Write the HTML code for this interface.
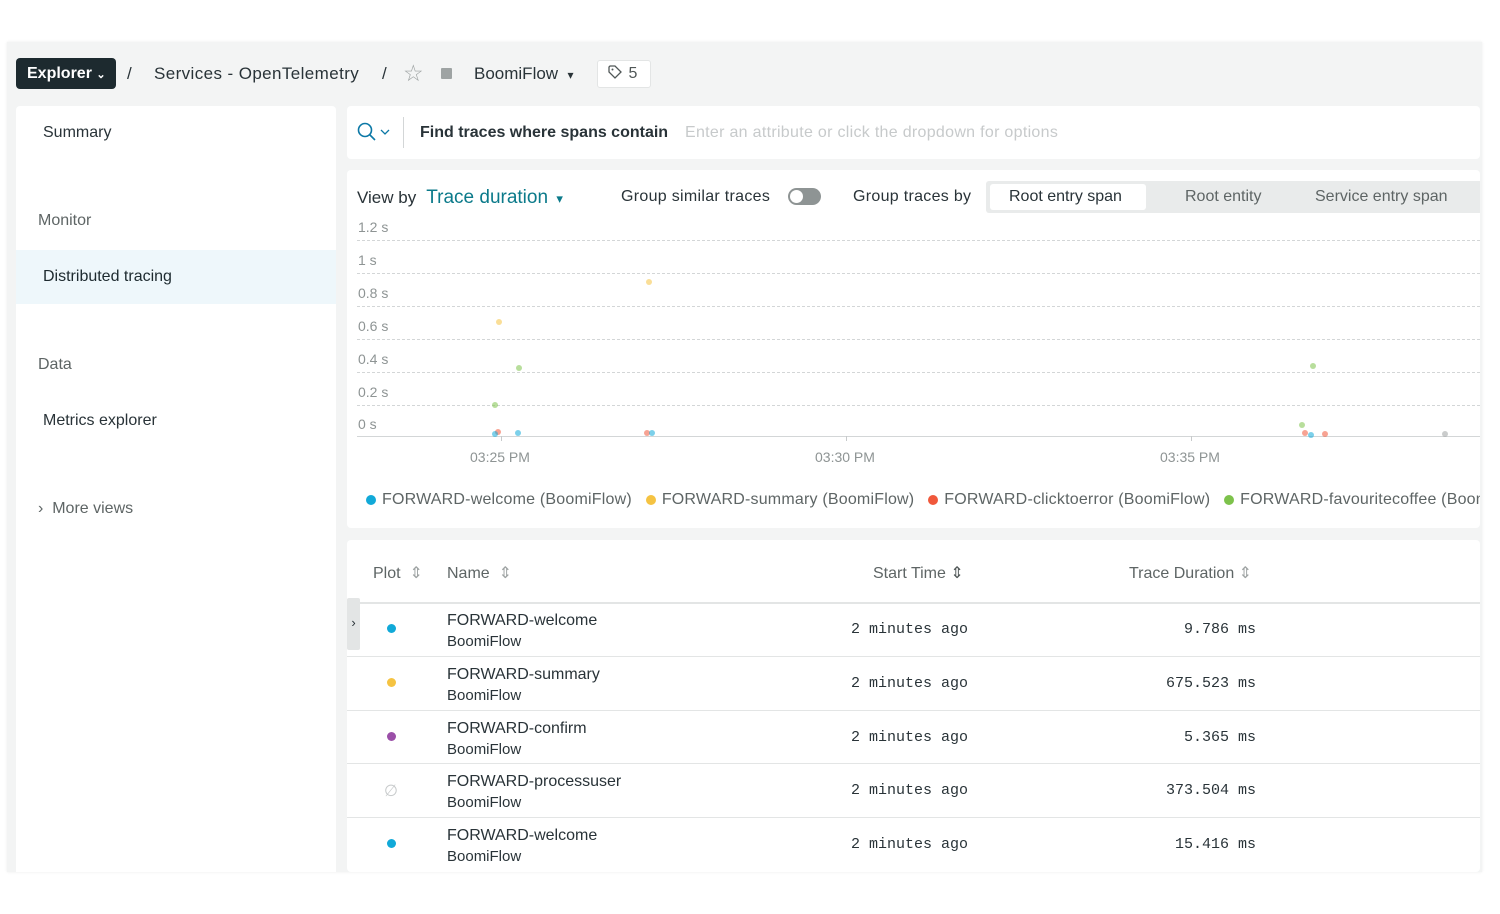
<!DOCTYPE html>
<html><head><style>
*{box-sizing:border-box;margin:0;padding:0}
body{width:1500px;height:914px;background:#fff;font-family:"Liberation Sans",sans-serif;color:#293338;position:relative;overflow:hidden}
.frame{position:absolute;left:7px;top:42px;width:1475px;height:830px;background:#f3f4f4;box-shadow:0 0 3px rgba(0,0,0,.08)}
.abs{position:absolute;white-space:nowrap}
.side{position:absolute;left:16px;top:106px;width:320px;height:766px;background:#fff;border-radius:4px 4px 0 0}
.card{position:absolute;background:#fff;border-radius:4px}
.mono{font-family:"Liberation Mono",monospace;font-size:15px}
.grid{position:absolute;left:357px;width:1123px;border-top:1px dashed #d3d6d7}
.yl{position:absolute;left:358px;font-size:14px;color:#8e9494}
.dot{position:absolute;width:6px;height:6px;border-radius:50%;opacity:.55}
.row{position:absolute;left:347px;width:1133px;height:54px;border-top:1px solid #e3e5e5}
.nm{position:absolute;left:100px;top:7px;font-size:16px;line-height:21px}
.nm span{font-size:15px}
.pd{position:absolute;left:40px;top:21px;width:9px;height:9px;border-radius:50%}
.st{position:absolute;left:504px;top:18px}
.du{position:absolute;right:224px;top:18px}
.leg{display:inline-block;width:10px;height:10px;border-radius:50%;margin-right:6px;vertical-align:-1px}
</style></head><body>
<div class="frame"></div>
<div class="abs" style="left:16px;top:58px;width:100px;height:31px;background:#1d2a2f;border-radius:4px;color:#fff;font-size:16px;font-weight:bold;line-height:31px;padding-left:11px">Explorer <span style="font-size:11px">⌄</span></div>
<div class="abs" style="left:127px;top:64px;font-size:17px">/</div>
<div class="abs" style="left:154px;top:64px;font-size:17px;letter-spacing:0.4px">Services - OpenTelemetry</div>
<div class="abs" style="left:382px;top:64px;font-size:17px">/</div>
<div class="abs" style="left:403px;top:60px;font-size:23px;color:#9ea3a3">☆</div>
<div class="abs" style="left:441px;top:68px;width:11px;height:11px;background:#9ea3a3;border-radius:1px"></div>
<div class="abs" style="left:474px;top:64px;font-size:17px">BoomiFlow &nbsp;<span style="font-size:12px">▾</span></div>
<div class="abs" style="left:597px;top:60px;width:54px;height:28px;background:#fff;border:1px solid #e3e5e5;border-radius:3px;font-size:16px;line-height:26px;padding-left:10px;color:#505757"><svg width="16" height="14" viewBox="0 0 16 14" style="vertical-align:-1px"><path d="M1 2v5l6 6 6-6-6-6H2z" fill="none" stroke="#505757" stroke-width="1.3"/><circle cx="4.5" cy="4.5" r="1" fill="#505757"/></svg> 5</div>

<div class="side"></div>
<div class="abs" style="left:43px;top:124px;font-size:16px">Summary</div>
<div class="abs" style="left:38px;top:212px;font-size:16px;color:#5e6565">Monitor</div>
<div class="abs" style="left:16px;top:250px;width:320px;height:54px;background:#eef7fb"></div>
<div class="abs" style="left:43px;top:268px;font-size:16px;color:#1d2a2f">Distributed tracing</div>
<div class="abs" style="left:38px;top:356px;font-size:16px;color:#5e6565">Data</div>
<div class="abs" style="left:43px;top:412px;font-size:16px">Metrics explorer</div>
<div class="abs" style="left:38px;top:500px;font-size:16px;color:#5e6565">›&nbsp;&nbsp;More views</div>

<div class="card" style="left:347px;top:106px;width:1133px;height:53px"></div>
<svg class="abs" style="left:357px;top:122px" width="36" height="22"><circle cx="8" cy="8" r="6.5" fill="none" stroke="#0b78a6" stroke-width="1.6"/><path d="M13 13l5 5" stroke="#0b78a6" stroke-width="1.6"/><path d="M24 8l4 4 4-4" fill="none" stroke="#0b78a6" stroke-width="1.3"/></svg>
<div class="abs" style="left:403px;top:117px;width:1px;height:31px;background:#d3d6d7"></div>
<div class="abs" style="left:420px;top:124px;font-size:16px;font-weight:bold;color:#293338">Find traces where spans contain</div>
<div class="abs" style="left:685px;top:124px;font-size:16px;color:#c7cacb;letter-spacing:0.3px">Enter an attribute or click the dropdown for options</div>

<div class="card" style="left:347px;top:170px;width:1133px;height:358px"></div>
<div class="abs" style="left:357px;top:187px;font-size:17px">View by <span style="color:#0b7a8a;font-size:19px">&nbsp;Trace duration</span> <span style="color:#0b7a8a;font-size:13px">&nbsp;▾</span></div>
<div class="abs" style="left:621px;top:188px;font-size:16px;letter-spacing:0.3px">Group similar traces</div>
<div class="abs" style="left:788px;top:188px;width:33px;height:17px;background:#8e9494;border-radius:9px"><div style="position:absolute;left:2px;top:2px;width:13px;height:13px;background:#fff;border-radius:50%"></div></div>
<div class="abs" style="left:853px;top:188px;font-size:16px;letter-spacing:0.3px">Group traces by</div>
<div class="abs" style="left:986px;top:181px;width:494px;height:32px;background:#e9ebeb;border-radius:3px 0 0 3px"></div>
<div class="abs" style="left:990px;top:184px;width:156px;height:26px;background:#fff;border-radius:3px"></div>
<div class="abs" style="left:1009px;top:188px;font-size:16px">Root entry span</div>
<div class="abs" style="left:1185px;top:188px;font-size:16px;color:#5e6565">Root entity</div>
<div class="abs" style="left:1315px;top:188px;font-size:16px;color:#5e6565">Service entry span</div>

<div class="yl" style="top:219px">1.2 s</div><div class="grid" style="top:240px"></div>
<div class="yl" style="top:252px">1 s</div><div class="grid" style="top:273px"></div>
<div class="yl" style="top:285px">0.8 s</div><div class="grid" style="top:306px"></div>
<div class="yl" style="top:318px">0.6 s</div><div class="grid" style="top:339px"></div>
<div class="yl" style="top:351px">0.4 s</div><div class="grid" style="top:372px"></div>
<div class="yl" style="top:384px">0.2 s</div><div class="grid" style="top:405px"></div>
<div class="yl" style="top:416px">0 s</div>
<div class="abs" style="left:357px;top:436px;width:1123px;height:1px;background:#d3d6d7"></div>
<div class="abs" style="left:501px;top:436px;width:1px;height:5px;background:#c7cacb"></div>
<div class="abs" style="left:846px;top:436px;width:1px;height:5px;background:#c7cacb"></div>
<div class="abs" style="left:1191px;top:436px;width:1px;height:5px;background:#c7cacb"></div>
<div class="abs" style="left:470px;top:449px;font-size:14px;color:#8e9494">03:25 PM</div>
<div class="abs" style="left:815px;top:449px;font-size:14px;color:#8e9494">03:30 PM</div>
<div class="abs" style="left:1160px;top:449px;font-size:14px;color:#8e9494">03:35 PM</div>

<div class="dot" style="left:646px;top:279px;background:#f5c342"></div>
<div class="dot" style="left:496px;top:319px;background:#f5c342"></div>
<div class="dot" style="left:516px;top:365px;background:#7dc24b"></div>
<div class="dot" style="left:492px;top:402px;background:#7dc24b"></div>
<div class="dot" style="left:495px;top:429px;background:#f0583b"></div>
<div class="dot" style="left:492px;top:431px;background:#11a9d8"></div>
<div class="dot" style="left:515px;top:430px;background:#11a9d8"></div>
<div class="dot" style="left:644px;top:430px;background:#f0583b"></div>
<div class="dot" style="left:649px;top:430px;background:#11a9d8"></div>
<div class="dot" style="left:1310px;top:363px;background:#7dc24b"></div>
<div class="dot" style="left:1299px;top:422px;background:#7dc24b"></div>
<div class="dot" style="left:1302px;top:430px;background:#f0583b"></div>
<div class="dot" style="left:1308px;top:432px;background:#11a9d8"></div>
<div class="dot" style="left:1322px;top:431px;background:#f0583b"></div>
<div class="dot" style="left:1442px;top:431px;background:#9ea3a3"></div>

<div class="abs" style="left:366px;top:491px;font-size:16px;color:#5e6565;width:1114px;overflow:hidden;letter-spacing:0.2px">
<span class="leg" style="background:#11a9d8"></span>FORWARD-welcome (BoomiFlow)&nbsp;&nbsp;&nbsp;<span class="leg" style="background:#f5c342"></span>FORWARD-summary (BoomiFlow)&nbsp;&nbsp;&nbsp;<span class="leg" style="background:#f0583b"></span>FORWARD-clicktoerror (BoomiFlow)&nbsp;&nbsp;&nbsp;<span class="leg" style="background:#7dc24b"></span>FORWARD-favouritecoffee (BoomiFlow)</div>

<div class="card" style="left:347px;top:540px;width:1133px;height:332px"></div>
<div class="abs" style="left:373px;top:563px;font-size:16px;color:#5e6565">Plot <span style="color:#9ea3a3">&nbsp;⇕</span></div>
<div class="abs" style="left:447px;top:563px;font-size:16px;color:#5e6565">Name <span style="color:#9ea3a3">&nbsp;⇕</span></div>
<div class="abs" style="left:873px;top:563px;font-size:16px;color:#5e6565">Start Time <span style="color:#505757">⇕</span></div>
<div class="abs" style="left:1129px;top:563px;font-size:16px;color:#5e6565">Trace Duration <span style="color:#9ea3a3">⇕</span></div>
<div class="abs" style="left:347px;top:602px;width:1133px;height:2px;background:#e3e5e5"></div>

<div class="row" style="top:603px;border-top:none"><div class="pd" style="background:#11a9d8"></div><div class="nm">FORWARD-welcome<br><span>BoomiFlow</span></div><div class="st mono">2 minutes ago</div><div class="du mono">9.786 ms</div></div>
<div class="abs" style="left:347px;top:598px;width:13px;height:52px;background:#e3e5e5;border-radius:2px;font-size:13px;line-height:50px;text-align:center">›</div>
<div class="row" style="top:656px"><div class="pd" style="background:#f5c342"></div><div class="nm">FORWARD-summary<br><span>BoomiFlow</span></div><div class="st mono">2 minutes ago</div><div class="du mono">675.523 ms</div></div>
<div class="row" style="top:710px"><div class="pd" style="background:#9b4fa8"></div><div class="nm">FORWARD-confirm<br><span>BoomiFlow</span></div><div class="st mono">2 minutes ago</div><div class="du mono">5.365 ms</div></div>
<div class="row" style="top:763px"><div class="abs" style="left:37px;top:17px;font-size:16px;color:#c7cacb">∅</div><div class="nm">FORWARD-processuser<br><span>BoomiFlow</span></div><div class="st mono">2 minutes ago</div><div class="du mono">373.504 ms</div></div>
<div class="row" style="top:817px"><div class="pd" style="background:#11a9d8"></div><div class="nm">FORWARD-welcome<br><span>BoomiFlow</span></div><div class="st mono">2 minutes ago</div><div class="du mono">15.416 ms</div></div>
</body></html>
